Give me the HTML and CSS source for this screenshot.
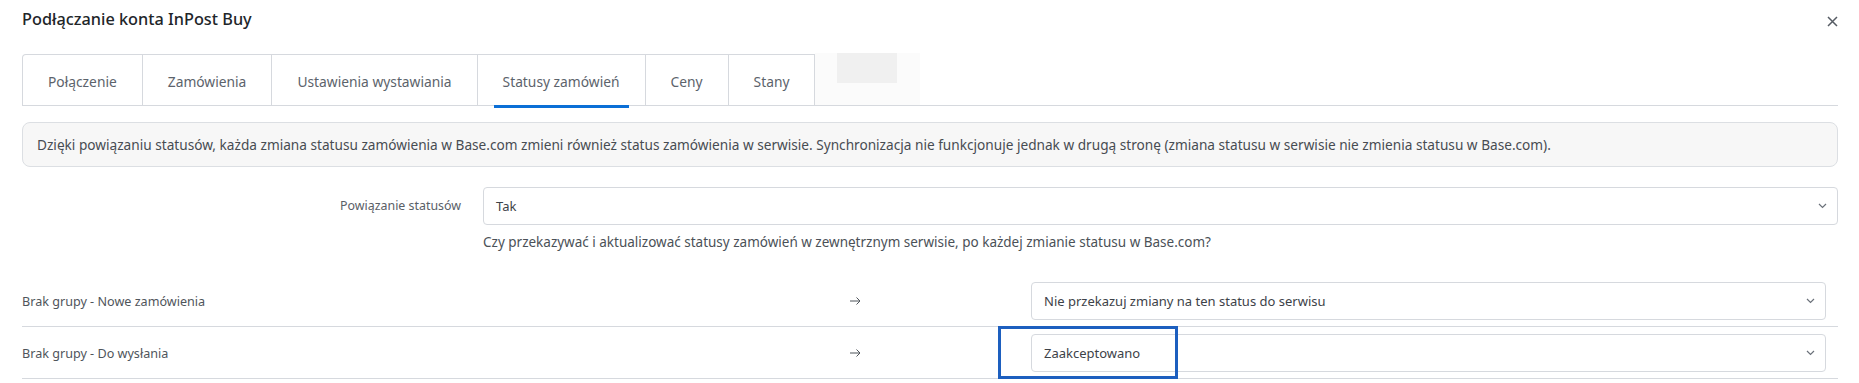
FILE: index.html
```html
<!DOCTYPE html>
<html lang="pl">
<head>
  <meta charset="UTF-8" />
  <title>Podłączanie konta InPost Buy</title>
  <link rel="stylesheet" href="styles.css">
</head>
<body>
  <div class="modal">
    <header class="modal-head">
      <h1>Podłączanie konta InPost Buy</h1>
      <button class="close" type="button" aria-label="Zamknij">
        <svg width="11" height="11" viewBox="0 0 11 11"><path d="M1 1l9 9M10 1l-9 9" stroke="#565c64" stroke-width="1.5" fill="none"/></svg>
      </button>
    </header>

    <nav class="tabs">
      <a class="tab">Połączenie</a>
      <a class="tab">Zamówienia</a>
      <a class="tab">Ustawienia wystawiania</a>
      <a class="tab active">Statusy zamówień</a>
      <a class="tab">Ceny</a>
      <a class="tab">Stany</a>
      <span class="tab-ghost"><span class="ghost-block"></span></span>
    </nav>

    <div class="info">
      Dzięki powiązaniu statusów, każda zmiana statusu zamówienia w Base.com zmieni również status zamówienia w serwisie. Synchronizacja nie funkcjonuje jednak w drugą stronę (zmiana statusu w serwisie nie zmienia statusu w Base.com).
    </div>

    <div class="field">
      <label class="field-label">Powiązanie statusów</label>
      <div class="field-body">
        <div class="select">
          <span>Tak</span>
          <svg class="chev" width="9" height="6" viewBox="0 0 9 6"><path d="M1 1l3.5 3.5L8 1" stroke="#6b717a" stroke-width="1.2" fill="none"/></svg>
        </div>
        <p class="help">Czy przekazywać i aktualizować statusy zamówień w zewnętrznym serwisie, po każdej zmianie statusu w Base.com?</p>
      </div>
    </div>

    <div class="map">
      <div class="map-row">
        <span class="map-label">Brak grupy - Nowe zamówienia</span>
        <svg class="arrow" width="11" height="8" viewBox="0 0 11 8"><path d="M0 4h10M6.5 0.5L10 4l-3.5 3.5" stroke="#4f555b" stroke-width="1" fill="none"/></svg>
        <div class="pick">
          <div class="select">
            <span>Nie przekazuj zmiany na ten status do serwisu</span>
            <svg class="chev" width="9" height="6" viewBox="0 0 9 6"><path d="M1 1l3.5 3.5L8 1" stroke="#6b717a" stroke-width="1.2" fill="none"/></svg>
          </div>
        </div>
      </div>
      <div class="map-row">
        <span class="map-label">Brak grupy - Do wysłania</span>
        <svg class="arrow" width="11" height="8" viewBox="0 0 11 8"><path d="M0 4h10M6.5 0.5L10 4l-3.5 3.5" stroke="#4f555b" stroke-width="1" fill="none"/></svg>
        <div class="pick">
          <div class="select">
            <span>Zaakceptowano</span>
            <svg class="chev" width="9" height="6" viewBox="0 0 9 6"><path d="M1 1l3.5 3.5L8 1" stroke="#6b717a" stroke-width="1.2" fill="none"/></svg>
          </div>
          <!-- zaznaczenie na zrzucie -->
          <span class="mark"></span>
        </div>
      </div>
    </div>
  </div>
</body>
</html>
```

FILE: styles.css
```css
:root {
  font-family: "Noto Sans", "Open Sans", sans-serif;
  color: #4b5157;
}
html, body {
  margin: 0; padding: 0;
  background: #fff;
}
.modal {
  padding: 0 21px 0 22px;
}
.modal-head {
  display: flex;
  align-items: center;
  justify-content: space-between;
  height: 38px;
  margin-bottom: 16px;
}
.modal-head h1 {
  margin: 0;
  font-size: 16.3px;
  font-weight: 500;
  color: #212529;
}
.close {
  display: flex;
  padding: 0;
  margin: 4px 0 0 0;
  border: none;
  background: none;
  cursor: pointer;
}
.tabs {
  display: flex;
  border-bottom: 1px solid #d6d9de;
}
.tab {
  position: relative;
  padding: 17px 25px 14px;
  line-height: 19px;
  font-size: 13.8px;
  color: #5c636b;
  border: 1px solid #d6d9de;
  border-bottom: none;
  border-left: none;
  cursor: pointer;
}
.tab:first-child {
  border-left: 1px solid #d6d9de;
  border-top-left-radius: 4px;
}
.tab.active::after {
  content: "";
  position: absolute;
  left: 16px;
  right: 16px;
  bottom: -3px;
  height: 3px;
  background: #0b6fd6;
}
.tab-ghost {
  width: 105px;
  margin-top: -1px;
  background: #fbfbfb;
  padding-left: 22px;
  box-sizing: border-box;
}
.ghost-block {
  display: block;
  width: 60px;
  height: 30px;
  background: #f0f0f0;
}
.info {
  margin-top: 16px;
  padding: 12px 14px;
  line-height: 19px;
  font-size: 13.65px;
  color: #474c52;
  background: #f7f7f7;
  border: 1px solid #dcdfe3;
  border-radius: 8px;
}
.field {
  display: grid;
  grid-template-columns: 439px 1fr;
  column-gap: 22px;
  margin-top: 20px;
}
.field-label {
  text-align: right;
  font-size: 12.4px;
  line-height: 38px;
  color: #5a6067;
}
.select {
  display: flex;
  align-items: center;
  justify-content: space-between;
  height: 38px;
  padding: 0 10px 0 12px;
  box-sizing: border-box;
  font-size: 13px;
  color: #3d4248;
  background: #fff;
  border: 1px solid #d6d9de;
  border-radius: 4px;
}
.help {
  margin: 8px 0 0;
  line-height: 18px;
  font-size: 13.5px;
  color: #4b5157;
}
.map {
  margin-top: 24px;
}
.map-row {
  display: grid;
  grid-template-columns: 828px 181px 1fr;
  align-items: center;
  padding: 7px 12px 6px 0;
  border-bottom: 1px solid #d6d9de;
}
.map-label {
  font-size: 12.6px;
  color: #4f555b;
}
.arrow {
  display: block;
}
.pick {
  position: relative;
}
.mark {
  position: absolute;
  left: -33px;
  top: -8px;
  width: 180px;
  height: 53px;
  border: 3px solid #1d5fbf;
  box-sizing: border-box;
}
```
